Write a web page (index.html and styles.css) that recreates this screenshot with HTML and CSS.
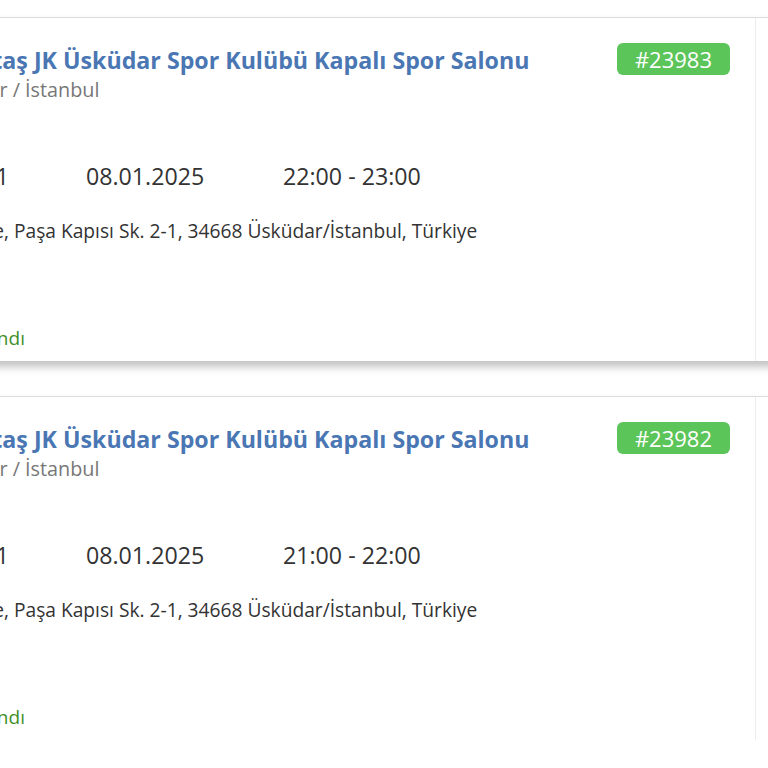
FILE: index.html
```html
<!DOCTYPE html>
<html lang="tr">
<head>
<meta charset="utf-8">
<title>Rezervasyonlar</title>
<link rel="stylesheet" href="styles.css">
</head>
<body>
<div class="list">
  <div class="card">
    <div class="main">
      <div class="head">
        <div class="title">Beşiktaş JK Üsküdar Spor Kulübü Kapalı Spor Salonu</div>
        <div class="badge">#23983</div>
      </div>
      <div class="loc">Üsküdar / İstanbul</div>
      <div class="when">
        <span>Salon 1</span>
        <span>08.01.2025</span>
        <span>22:00 - 23:00</span>
      </div>
      <div class="addr">Selimiye, Paşa Kapısı Sk. 2-1, 34668 Üsküdar/İstanbul, Türkiye</div>
      <div class="status">Onaylandı</div>
    </div>
    <div class="aside"></div>
  </div>
  <div class="card">
    <div class="main">
      <div class="head">
        <div class="title">Beşiktaş JK Üsküdar Spor Kulübü Kapalı Spor Salonu</div>
        <div class="badge">#23982</div>
      </div>
      <div class="loc">Üsküdar / İstanbul</div>
      <div class="when">
        <span>Salon 1</span>
        <span>08.01.2025</span>
        <span>21:00 - 22:00</span>
      </div>
      <div class="addr">Selimiye, Paşa Kapısı Sk. 2-1, 34668 Üsküdar/İstanbul, Türkiye</div>
      <div class="status">Onaylandı</div>
    </div>
    <div class="aside"></div>
  </div>
</div>
</body>
</html>
```

FILE: styles.css
```css
html, body {
  margin: 0;
  padding: 0;
  background: #ffffff;
  overflow: hidden;
}
body {
  padding-top: 17px;
  font-family: "Open Sans", "Noto Sans", sans-serif;
  color: #333333;
}
.list {
  margin-left: -90px;
  width: 1100px;
  display: flex;
  flex-direction: column;
  gap: 35px;
}
.card {
  display: flex;
  background: #ffffff;
  border-top: 1px solid #dcdcdc;
  box-shadow: 0 6px 8px rgba(0, 0, 0, 0.24);
}
.main {
  flex: 0 0 846px;
  box-sizing: border-box;
  padding: 27px 25px 11px 20px;
  border-right: 1px solid #ececec;
}
.aside {
  flex: 1 1 auto;
}
.head {
  display: flex;
  justify-content: space-between;
  align-items: flex-start;
}
.title {
  font-size: 23.2px;
  line-height: 30px;
  font-weight: 700;
  color: #4a77b3;
  white-space: nowrap;
}
.badge {
  margin-top: -2px;
  background: #5cc55a;
  color: #ffffff;
  font-size: 22px;
  line-height: 32px;
  padding: 0 18px;
  border-radius: 6px;
}
.loc {
  margin-top: 3px;
  font-size: 19.8px;
  line-height: 24px;
  color: #777777;
}
.when {
  margin-top: 59px;
  display: grid;
  grid-template-columns: 156px 197px auto;
  font-size: 23.2px;
  line-height: 30px;
  color: #333333;
}
.addr {
  margin-top: 28px;
  font-size: 19.2px;
  line-height: 24px;
  color: #333333;
}
.status {
  margin-top: 83px;
  padding-left: 5px;
  font-size: 19px;
  line-height: 24px;
  color: #3f8f2a;
}
```
